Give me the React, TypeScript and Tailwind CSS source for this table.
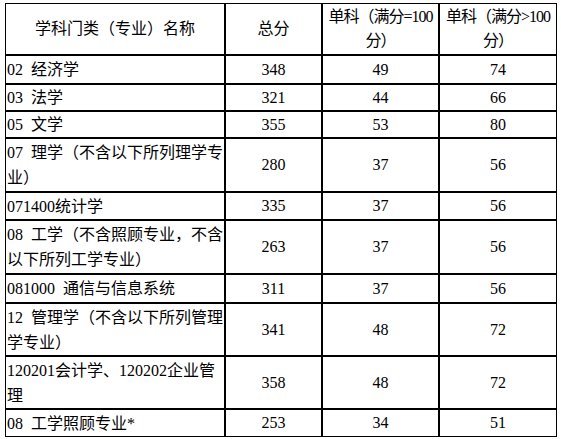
import React from 'react';

type Row = {
	name: string;
	total: string;
	a: string;
	b: string;
	h: string;
};

// en space (\u2002) keeps the half-width gap the source table has after the code
const rows: Row[] = [
	{ name: '02\u2002经济学', total: '348', a: '49', b: '74', h: 'h-[29px]' },
	{ name: '03\u2002法学', total: '321', a: '44', b: '66', h: 'h-[27px]' },
	{ name: '05\u2002文学', total: '355', a: '53', b: '80', h: 'h-[27px]' },
	{ name: '07\u2002理学（不含以下所列理学专业）', total: '280', a: '37', b: '56', h: 'h-[54px]' },
	{ name: '071400统计学', total: '335', a: '37', b: '56', h: 'h-[28px]' },
	{ name: '08\u2002工学（不含照顾专业，不含以下所列工学专业）', total: '263', a: '37', b: '56', h: 'h-[54px]' },
	{ name: '081000\u2002通信与信息系统', total: '311', a: '37', b: '56', h: 'h-[29px]' },
	{ name: '12\u2002管理学（不含以下所列管理学专业）', total: '341', a: '48', b: '72', h: 'h-[53px]' },
	{ name: '120201会计学、120202企业管理', total: '358', a: '48', b: '72', h: 'h-[53px]' },
	{ name: '08\u2002工学照顾专业*', total: '253', a: '34', b: '51', h: 'h-[27px]' },
];

export default function App() {
	return (
		<div className="w-[561px] h-[439px] bg-white pt-[3px] pl-[5px] text-black font-['Liberation_Serif','Noto_Sans_CJK_SC',serif] text-[16px] leading-[24px]">
			<div className="w-[552px] border border-black">
				<table className="w-[550px] table-fixed border-collapse">
					<colgroup>
						<col className="w-[219px]" />
						<col className="w-[97px]" />
						<col className="w-[117px]" />
						<col className="w-[117px]" />
					</colgroup>
					<thead>
						<tr className="h-[51px]">
							<th className="font-normal text-center align-middle border-r-2 border-b-2 border-black p-0">
								学科门类（专业）名称
							</th>
							<th className="font-normal text-center align-middle border-r-2 border-b-2 border-black p-0">
								总分
							</th>
							<th className="font-normal text-center align-middle border-r-2 border-b-2 border-black p-0 tracking-[-1px] whitespace-nowrap">
								单科（满分=100
								<br />
								分）
							</th>
							<th className="font-normal text-center align-middle border-b-2 border-black p-0 tracking-[-1px] whitespace-nowrap">
								单科（满分&gt;100
								<br />
								分）
							</th>
						</tr>
					</thead>
					<tbody>
						{rows.map((r, i) => {
							const last = i === rows.length - 1;
							return (
								<tr key={i} className={r.h}>
									<td className={last ? 'border-r-2 border-black p-0 pl-px align-middle leading-[25px]' : 'border-r-2 border-b-2 border-black p-0 pl-px align-middle leading-[25px]'}>
										{r.name}
									</td>
									<td className={last ? 'border-r-2 border-black p-0 text-center align-middle' : 'border-r-2 border-b-2 border-black p-0 text-center align-middle'}>
										{r.total}
									</td>
									<td className={last ? 'border-r-2 border-black p-0 text-center align-middle' : 'border-r-2 border-b-2 border-black p-0 text-center align-middle'}>
										{r.a}
									</td>
									<td className={last ? 'border-black p-0 text-center align-middle' : 'border-b-2 border-black p-0 text-center align-middle'}>
										{r.b}
									</td>
								</tr>
							);
						})}
					</tbody>
				</table>
			</div>
		</div>
	);
}
